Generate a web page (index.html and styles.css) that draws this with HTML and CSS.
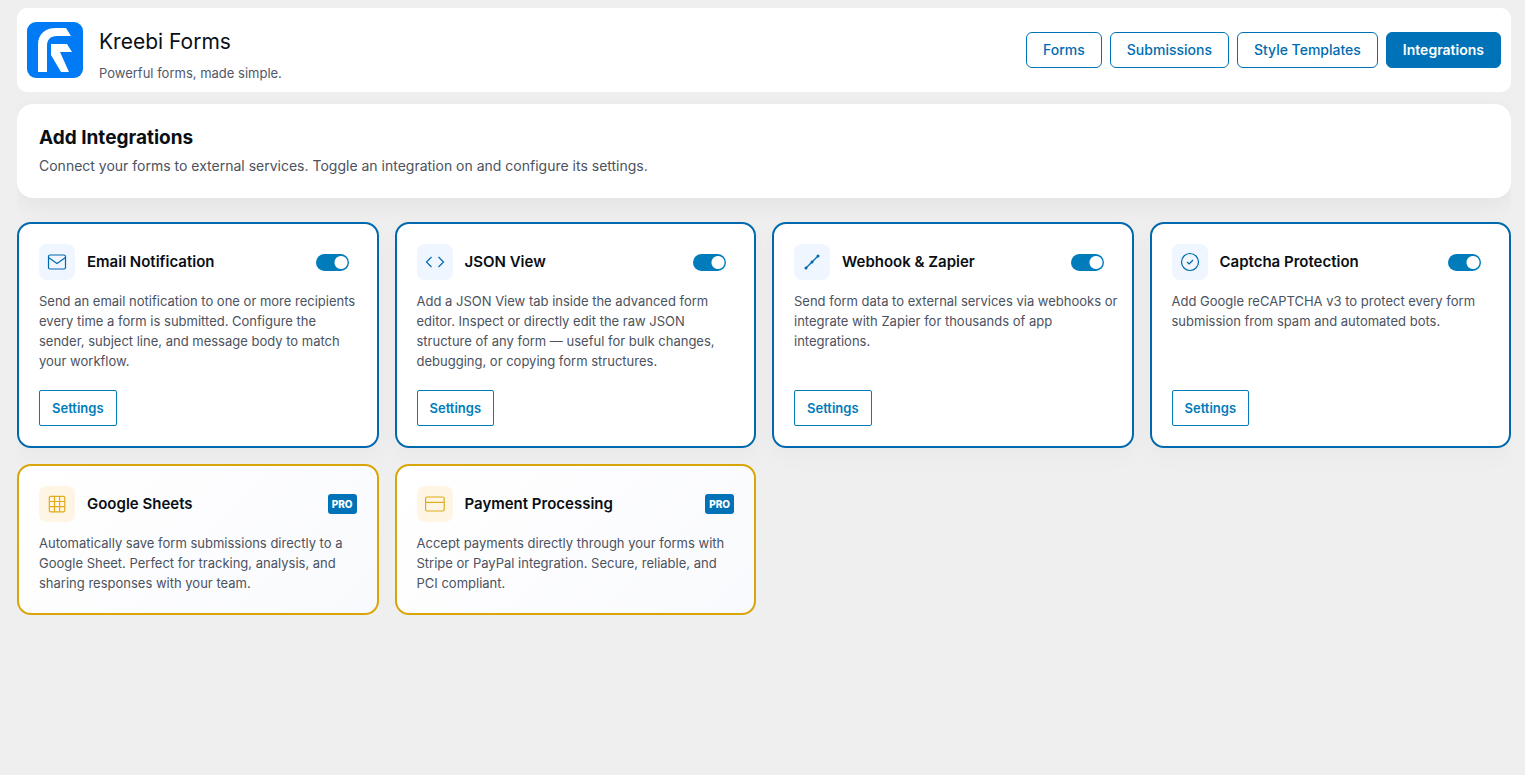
FILE: index.html
```
<!DOCTYPE html>
<html lang="en">
<head>
  <meta charset="UTF-8">
  <meta name="viewport" content="width=device-width, initial-scale=1.0">
  <title>Kreebi Forms - Integrations</title>
  <link rel="stylesheet" href="styles.css">
</head>
<body>
  <header class="topbar">
    <svg class="logo" viewBox="0 0 56 56" aria-hidden="true">
      <rect width="56" height="56" rx="9" fill="#007bf5"/>
      <path d="M11 50V23C11 12 18 6 29 6H39L44 14H30C23 14 20 18 20 24V50Z" fill="#fff"/>
      <path d="M24 22H40L45 30H33L42 50H34L24 33Z" fill="#fff"/>
    </svg>
    <div class="brand">
      <h1>Kreebi Forms</h1>
      <p>Powerful forms, made simple.</p>
    </div>
    <nav class="tabs">
      <a class="tab" href="#forms">Forms</a>
      <a class="tab" href="#submissions">Submissions</a>
      <a class="tab" href="#templates">Style Templates</a>
      <a class="tab active" href="#integrations">Integrations</a>
    </nav>
  </header>

  <main>
    <section class="intro">
      <h2>Add Integrations</h2>
      <p>Connect your forms to external services. Toggle an integration on and configure its settings.</p>
    </section>

    <div class="grid">
      <article class="card">
        <div class="card-head">
          <span class="icon">
            <svg viewBox="0 0 20 20"><rect x="1.5" y="3" width="17" height="14" rx="1.5"/><path d="M1.5 5.5L10 11.5L18.5 5.5"/></svg>
          </span>
          <h3 id="email">Email Notification</h3>
          <input class="toggle" type="checkbox" aria-labelledby="email" checked>
        </div>
        <p>Send an email notification to one or more recipients every time a form is submitted. Configure the sender, subject line, and message body to match your workflow.</p>
        <button class="settings" type="button">Settings</button>
      </article>

      <article class="card">
        <div class="card-head">
          <span class="icon">
            <svg viewBox="0 0 20 20"><path d="M6.5 5L1.5 10L6.5 15M13.5 5L18.5 10L13.5 15"/></svg>
          </span>
          <h3 id="json">JSON View</h3>
          <input class="toggle" type="checkbox" aria-labelledby="json" checked>
        </div>
        <p>Add a JSON View tab inside the advanced form editor. Inspect or directly edit the raw JSON structure of any form — useful for bulk changes, debugging, or copying form structures.</p>
        <button class="settings" type="button">Settings</button>
      </article>

      <article class="card">
        <div class="card-head">
          <span class="icon">
            <svg viewBox="0 0 20 20"><path d="M4 16L16 4"/><g class="dots"><circle cx="4" cy="16" r="1.5"/><circle cx="10" cy="10" r="1.5"/><circle cx="16" cy="4" r="1.5"/></g></svg>
          </span>
          <h3 id="webhook">Webhook &amp; Zapier</h3>
          <input class="toggle" type="checkbox" aria-labelledby="webhook" checked>
        </div>
        <p>Send form data to external services via webhooks or integrate with Zapier for thousands of app integrations.</p>
        <button class="settings" type="button">Settings</button>
      </article>

      <article class="card">
        <div class="card-head">
          <span class="icon">
            <svg viewBox="0 0 20 20"><circle cx="10" cy="10" r="8.5"/><path d="M7 10L9.2 12L13 8"/></svg>
          </span>
          <h3 id="captcha">Captcha Protection</h3>
          <input class="toggle" type="checkbox" aria-labelledby="captcha" checked>
        </div>
        <p>Add Google reCAPTCHA v3 to protect every form submission from spam and automated bots.</p>
        <button class="settings" type="button">Settings</button>
      </article>

      <article class="card pro">
        <div class="card-head">
          <span class="icon">
            <svg viewBox="0 0 20 20"><rect x="2.3" y="2.3" width="15.5" height="15.5" rx="1.5"/><path d="M7.5 2.3V17.8M12.6 2.3V17.8M2.3 7.5H17.8M2.3 12.6H17.8"/></svg>
          </span>
          <h3>Google Sheets</h3>
          <span class="badge">PRO</span>
        </div>
        <p>Automatically save form submissions directly to a Google Sheet. Perfect for tracking, analysis, and sharing responses with your team.</p>
      </article>

      <article class="card pro">
        <div class="card-head">
          <span class="icon">
            <svg viewBox="0 0 20 20"><rect x="0.6" y="3" width="18.6" height="14" rx="1.5"/><path d="M0.6 8.4H19.2"/></svg>
          </span>
          <h3>Payment Processing</h3>
          <span class="badge">PRO</span>
        </div>
        <p>Accept payments directly through your forms with Stripe or PayPal integration. Secure, reliable, and PCI compliant.</p>
      </article>
    </div>
  </main>
</body>
</html>
```
FILE: styles.css
```
* {
  box-sizing: border-box;
}

body {
  margin: 8px 14px 24px 17px;
  background: #efefef;
  color: #0a0f14;
  font-family: Inter, "Liberation Sans", sans-serif;
  font-size: 13px;
  line-height: 20px;
}

h1, h2, h3, p {
  margin: 0;
}

/* Header */
.topbar {
  display: flex;
  align-items: center;
  gap: 16px;
  padding: 8px 10px;
  background: #fff;
  border-radius: 10px;
}

.logo {
  width: 56px;
  height: 56px;
  flex: none;
}

.brand {
  padding: 12px 0 2px;
}

.brand h1 {
  font-size: 21px;
  font-weight: 400;
  line-height: 28px;
}

.brand p {
  margin-top: 8px;
  color: #50586a;
  line-height: 18px;
}

.tabs {
  display: flex;
  gap: 8px;
  margin-left: auto;
}

.tab {
  padding: 7px 16px;
  border: 1px solid #0073b8;
  border-radius: 6px;
  color: #006cb0;
  font-size: 14px;
  font-weight: 500;
  text-decoration: none;
}

.tab.active {
  background: #0073b8;
  color: #fff;
  font-weight: 600;
}

/* Page intro */
.intro {
  margin: 12px 0 24px;
  padding: 22px;
  background: #fff;
  border-radius: 16px;
  box-shadow: 0 8px 24px rgba(15, 23, 42, 0.05);
}

.intro h2 {
  font-size: 19px;
  font-weight: 700;
  line-height: 24px;
}

.intro p {
  margin-top: 6px;
  color: #4b5260;
  font-size: 14px;
}

/* Cards */
.grid {
  display: grid;
  grid-template-columns: repeat(4, 1fr);
  gap: 16px;
}

.card {
  display: flex;
  flex-direction: column;
  padding: 20px;
  background: #fff;
  border: 2px solid #0069ad;
  border-radius: 14px;
  box-shadow: 0 8px 24px rgba(15, 23, 42, 0.03);
}

.card.pro {
  background: linear-gradient(135deg, #fff, #f9fafd);
  border-color: #d9a509;
  box-shadow: none;
}

.card-head {
  display: flex;
  align-items: center;
  gap: 12px;
  margin-bottom: 11px;
}

.card-head h3 {
  flex: 1;
  font-size: 15px;
  font-weight: 600;
}

.card p {
  margin-right: -6px;
  color: #4b5260;
}

.card p:not(:last-child) {
  margin-bottom: 19px;
}

.icon {
  display: flex;
  align-items: center;
  justify-content: center;
  width: 36px;
  height: 36px;
  background: #eff6ff;
  border-radius: 8px;
  color: #0069ad;
}

.icon svg {
  width: 20px;
  height: 20px;
  fill: none;
  stroke: currentColor;
  stroke-width: 1.2;
}

.icon .dots {
  fill: currentColor;
  stroke: none;
}

.pro .icon {
  background: #fff5e4;
  color: #dfac1a;
}

.toggle {
  appearance: none;
  width: 33px;
  height: 17px;
  margin: 0 8px 0 0;
  border-radius: 9px;
  background: radial-gradient(circle at 25px 50%, #fff 6px, #007cba 7px);
  cursor: pointer;
}

.toggle:not(:checked) {
  background: radial-gradient(circle at 8px 50%, #fff 6px, #949494 7px);
}

.badge {
  padding: 0 4px;
  background: #0073b8;
  border-radius: 3px;
  color: #fff;
  font-size: 10px;
  font-weight: 800;
}

.settings {
  align-self: flex-start;
  height: 36px;
  margin-top: auto;
  padding: 0 12px;
  background: #fff;
  border: 1px solid #007cba;
  border-radius: 2px;
  color: #007cba;
  font: inherit;
  font-weight: 600;
  cursor: pointer;
}

@media (max-width: 1100px) {
  .grid {
    grid-template-columns: repeat(2, 1fr);
  }
}
```
